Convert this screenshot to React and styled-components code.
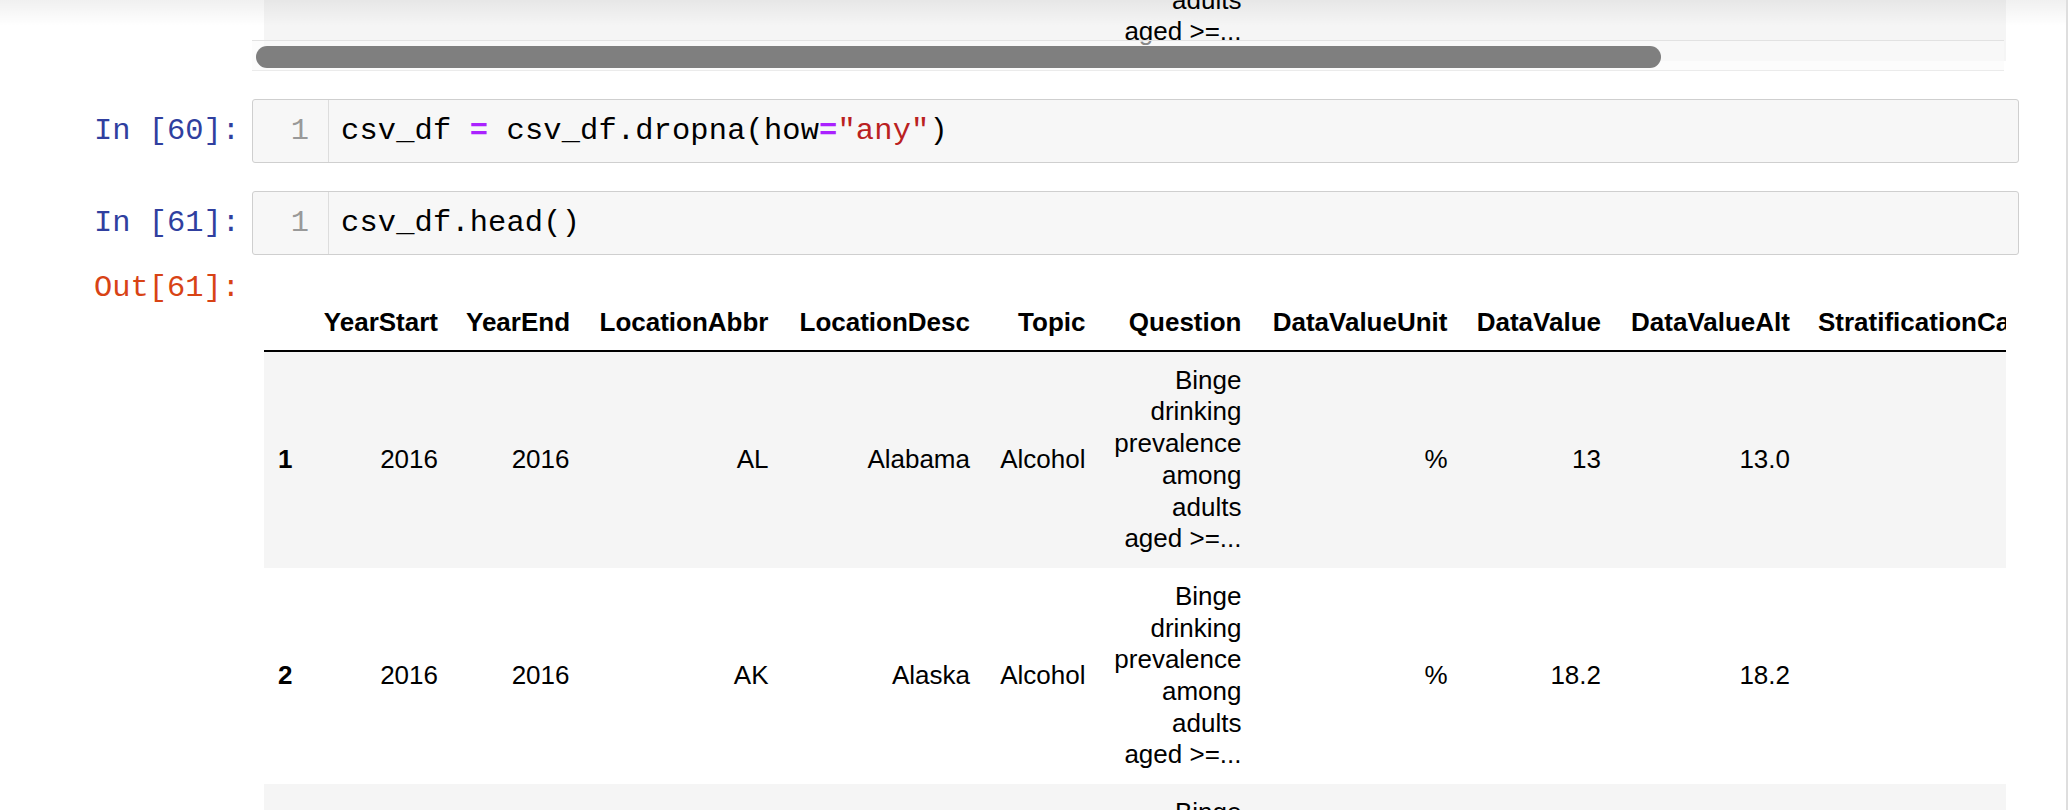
import React from 'react'
import styled, { createGlobalStyle } from 'styled-components'

const GlobalStyle = createGlobalStyle`
	html, body {
		margin: 0;
		padding: 0;
		background: #fff;
		overflow: hidden;
	}
	body {
		font-family: "Liberation Sans", Arial, Helvetica, sans-serif;
	}
`

const columns = [
	{ key: 'idx', title: '', width: 42 },
	{ key: 'YearStart', title: 'YearStart', width: 146 },
	{ key: 'YearEnd', title: 'YearEnd', width: 131.5 },
	{ key: 'LocationAbbr', title: 'LocationAbbr', width: 199 },
	{ key: 'LocationDesc', title: 'LocationDesc', width: 201.5 },
	{ key: 'Topic', title: 'Topic', width: 115.5 },
	{ key: 'Question', title: 'Question', width: 156, wrap: true },
	{ key: 'DataValueUnit', title: 'DataValueUnit', width: 206 },
	{ key: 'DataValue', title: 'DataValue', width: 153.5 },
	{ key: 'DataValueAlt', title: 'DataValueAlt', width: 189 },
	{ key: 'StratificationCategory1', title: 'StratificationCategory1', width: 313 },
	{ key: 'Stratification1', title: 'Stratification1', width: 200 },
	{ key: 'GeoLocation', title: 'GeoLocation', width: 300 },
]

const tableWidth = columns.reduce((sum, c) => sum + c.width, 0)

const question = 'Binge drinking prevalence among adults aged >=...'

const rows = [
	{ idx: 1, YearStart: 2016, YearEnd: 2016, LocationAbbr: 'AL', LocationDesc: 'Alabama', Topic: 'Alcohol', Question: question, DataValueUnit: '%', DataValue: '13', DataValueAlt: '13.0', StratificationCategory1: 'Overall', Stratification1: 'Overall', GeoLocation: '(32.84057112200048, -86.63186076199969)' },
	{ idx: 2, YearStart: 2016, YearEnd: 2016, LocationAbbr: 'AK', LocationDesc: 'Alaska', Topic: 'Alcohol', Question: question, DataValueUnit: '%', DataValue: '18.2', DataValueAlt: '18.2', StratificationCategory1: 'Overall', Stratification1: 'Overall', GeoLocation: '(64.84507995700051, -147.72205903599973)' },
	{ idx: 3, YearStart: 2016, YearEnd: 2016, LocationAbbr: 'AZ', LocationDesc: 'Arizona', Topic: 'Alcohol', Question: question, DataValueUnit: '%', DataValue: '15.6', DataValueAlt: '15.6', StratificationCategory1: 'Overall', Stratification1: 'Overall', GeoLocation: '(34.865970280000454, -111.76381127699972)' },
	{ idx: 4, YearStart: 2016, YearEnd: 2016, LocationAbbr: 'AR', LocationDesc: 'Arkansas', Topic: 'Alcohol', Question: question, DataValueUnit: '%', DataValue: '15', DataValueAlt: '15.0', StratificationCategory1: 'Overall', Stratification1: 'Overall', GeoLocation: '(34.74865012400045, -92.27449074299966)' },
	{ idx: 5, YearStart: 2016, YearEnd: 2016, LocationAbbr: 'CA', LocationDesc: 'California', Topic: 'Alcohol', Question: question, DataValueUnit: '%', DataValue: '16.3', DataValueAlt: '16.3', StratificationCategory1: 'Overall', Stratification1: 'Overall', GeoLocation: '(37.63864012300047, -120.99999953799971)' },
]

const Page = styled.div`
	position: relative;
	width: 2068px;
	height: 810px;
	box-sizing: border-box;
	border-right: 2px solid #dedede;
	overflow: hidden;
`

const HeaderShade = styled.div`
	position: absolute;
	top: 0;
	left: 0;
	right: 0;
	height: 26px;
	background: linear-gradient(rgba(0, 0, 0, 0.06), rgba(0, 0, 0, 0));
	pointer-events: none;
	z-index: 5;
`

const Notebook = styled.div`
	display: flex;
	flex-direction: column;
	width: 2019px;
`

const Cell = styled.div`
	display: flex;
	align-items: flex-start;
	gap: 12px;
	margin-top: ${p => p.$gap || 0}px;
`

const Prompt = styled.div`
	flex: 0 0 240px;
	box-sizing: border-box;
	padding-top: ${p => p.$top || 0}px;
	text-align: right;
	font-family: "Liberation Mono", "Courier New", monospace;
	font-size: 30.4px;
	line-height: 36px;
	white-space: pre;
	color: ${p => (p.$out ? '#d84315' : '#303f9f')};
`

const InputBox = styled.div`
	flex: 1;
	display: flex;
	background: #f7f7f7;
	border: 1px solid #cfcfcf;
	border-radius: 3px;
	font-family: "Liberation Mono", "Courier New", monospace;
	font-size: 30.4px;
	line-height: 36px;
`

const Gutter = styled.div`
	flex: 0 0 76px;
	box-sizing: border-box;
	padding: 13px 19px 13px 0;
	border-right: 1px solid #ddd;
	text-align: right;
	color: #999;
`

const Code = styled.div`
	padding: 13px 0 13px 12px;
	white-space: pre;
	color: #000;
	letter-spacing: 0.15px;
`

const Op = styled.span`
	color: #aa22ff;
	font-weight: bold;
`

const Str = styled.span`
	color: #ba2121;
`

const OutputArea = styled.div`
	flex: 0 0 1754px;
	position: relative;
	box-sizing: border-box;
	padding: ${p => p.$top || 0}px 0 0 12px;
	height: ${p => (p.$height ? `${p.$height}px` : 'auto')};
	overflow: hidden;
`

const TailClip = styled.div`
	height: 61px;
	display: flex;
	flex-direction: column;
	justify-content: flex-end;
	overflow: hidden;
`

const ScrollTrack = styled.div`
	position: absolute;
	top: 40px;
	left: 0;
	right: 2px;
	height: 31px;
	box-sizing: border-box;
	padding: 5px 0 0 4px;
	background: rgba(250, 250, 250, 0.55);
	border-top: 1px solid #e2e2e2;
	border-bottom: 1px solid #ebebeb;
`

const ScrollThumb = styled.div`
	width: ${p => p.$width}px;
	height: 22px;
	border-radius: 11px;
	background: #7f7f7f;
`

const Table = styled.table`
	flex: none;
	border-collapse: collapse;
	table-layout: fixed;
	width: ${tableWidth}px;
	font-family: "Liberation Sans", Arial, Helvetica, sans-serif;
	font-size: 26px;
	line-height: 31.7px;
	color: #000;
`

const Col = styled.col`
	width: ${p => p.$w}px;
`

const HeadCell = styled.th`
	padding: 15px 14px 11px;
	border-bottom: 2px solid #000;
	text-align: right;
	vertical-align: bottom;
	font-weight: bold;
	white-space: nowrap;
`

const BodyRow = styled.tr`
	background: ${p => (p.$odd ? '#f5f5f5' : '#fff')};
`

const IndexCell = styled.th`
	padding: 13px 14px;
	text-align: left;
	vertical-align: middle;
	font-weight: bold;
	white-space: nowrap;
`

const DataCell = styled.td`
	padding: 13px 14px;
	text-align: right;
	vertical-align: middle;
	white-space: ${p => (p.$wrap ? 'normal' : 'nowrap')};
	overflow: hidden;
`

function DataFrame({ data, showHeader = true }) {
	return (
		<Table>
			<colgroup>
				{columns.map(c => (
					<Col key={c.key} $w={c.width} />
				))}
			</colgroup>
			{showHeader && (
				<thead>
					<tr>
						{columns.map(c => (
							<HeadCell key={c.key}>{c.title}</HeadCell>
						))}
					</tr>
				</thead>
			)}
			<tbody>
				{data.map((row, i) => (
					<BodyRow key={row.idx} $odd={i % 2 === 0}>
						{columns.map(c =>
							c.key === 'idx' ? (
								<IndexCell key={c.key}>{row.idx}</IndexCell>
							) : (
								<DataCell key={c.key} $wrap={c.wrap}>
									{row[c.key]}
								</DataCell>
							)
						)}
					</BodyRow>
				))}
			</tbody>
		</Table>
	)
}

function InputCell({ count, gap, children }) {
	return (
		<Cell $gap={gap}>
			<Prompt $top={14}>{`In [${count}]:`}</Prompt>
			<InputBox>
				<Gutter>1</Gutter>
				<Code>{children}</Code>
			</InputBox>
		</Cell>
	)
}

export default function App() {
	const prevRow = [{ ...rows[4], idx: 4 }]
	return (
		<Page>
			<GlobalStyle />
			<HeaderShade />
			<Notebook>
				<Cell>
					<Prompt />
					<OutputArea $height={71}>
						<TailClip>
							<DataFrame data={prevRow} showHeader={false} />
						</TailClip>
						<ScrollTrack>
							<ScrollThumb $width={1405} />
						</ScrollTrack>
					</OutputArea>
				</Cell>

				<InputCell count={60} gap={28}>
					csv_df <Op>=</Op> csv_df.dropna(how<Op>=</Op><Str>"any"</Str>)
				</InputCell>

				<InputCell count={61} gap={28}>
					csv_df.head()
				</InputCell>

				<Cell>
					<Prompt $out $top={15}>Out[61]:</Prompt>
					<OutputArea $top={37}>
						<DataFrame data={rows} />
					</OutputArea>
				</Cell>
			</Notebook>
		</Page>
	)
}
